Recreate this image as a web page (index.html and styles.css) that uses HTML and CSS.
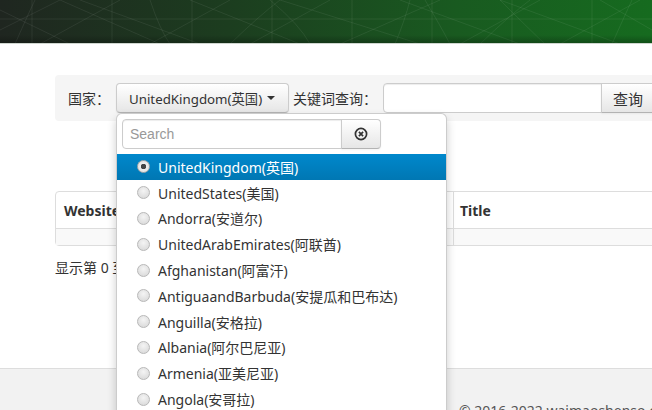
FILE: index.html
```html
<!DOCTYPE html>
<html lang="zh">
<head>
<meta charset="utf-8">
<title>查询</title>
<link rel="stylesheet" href="styles.css">
</head>
<body>
<header class="topbar">
  <svg class="pattern" width="652" height="44" viewBox="0 0 652 44" preserveAspectRatio="none">
    <g fill="none" stroke="rgba(255,255,255,0.07)" stroke-width="1">
      <line x1="0" y1="19" x2="652" y2="19"/>
      <line x1="32" y1="0" x2="32" y2="44"/>
      <line x1="112" y1="0" x2="112" y2="44"/>
      <line x1="192" y1="0" x2="192" y2="44"/>
      <line x1="272" y1="0" x2="272" y2="44"/>
      <line x1="352" y1="0" x2="352" y2="44"/>
      <line x1="432" y1="0" x2="432" y2="44"/>
      <line x1="512" y1="0" x2="512" y2="44"/>
      <line x1="592" y1="0" x2="592" y2="44"/>
      <path d="M0 10 L70 44 M0 30 L60 0 M60 0 L160 44 M40 44 L120 0 M80 0 L200 44 M150 44 L230 0 M190 0 L300 44 M250 44 L330 0 M280 0 L420 44 M340 44 L440 0 M400 0 L520 44 M460 44 L540 0 M500 0 L620 44 M560 44 L640 0 M600 0 L652 30"/>
      <path d="M15 44 Q30 10 35 0 M150 0 Q160 30 170 44 M230 44 Q260 15 280 0 M270 0 Q300 25 310 44 M395 44 Q405 20 410 0 M425 0 Q440 25 450 44 M480 44 Q510 15 530 0 M500 0 Q530 30 545 44 M612 44 Q625 15 632 0"/>
    </g>
  </svg>
</header>

<main class="page">
  <form class="searchbar">
    <label class="lbl">国家：</label>
    <div class="select-wrap">
      <button type="button" class="btn btn-select">UnitedKingdom(英国) <span class="caret"></span></button>
      <div class="dropdown">
        <div class="dd-search">
          <input class="dd-input" type="text" placeholder="Search">
          <button type="button" class="btn dd-clear">
            <svg width="14" height="14" viewBox="0 0 14 14"><circle cx="7" cy="7" r="5.6" fill="none" stroke="#333" stroke-width="1.7"/><path d="M4.9 4.9 L9.1 9.1 M9.1 4.9 L4.9 9.1" stroke="#333" stroke-width="1.7"/></svg>
          </button>
        </div>
        <ul class="dd-list">
          <li class="dd-item active"><span class="radio on"></span>UnitedKingdom(英国)</li>
          <li class="dd-item"><span class="radio"></span>UnitedStates(美国)</li>
          <li class="dd-item"><span class="radio"></span>Andorra(安道尔)</li>
          <li class="dd-item"><span class="radio"></span>UnitedArabEmirates(阿联酋)</li>
          <li class="dd-item"><span class="radio"></span>Afghanistan(阿富汗)</li>
          <li class="dd-item"><span class="radio"></span>AntiguaandBarbuda(安提瓜和巴布达)</li>
          <li class="dd-item"><span class="radio"></span>Anguilla(安格拉)</li>
          <li class="dd-item"><span class="radio"></span>Albania(阿尔巴尼亚)</li>
          <li class="dd-item"><span class="radio"></span>Armenia(亚美尼亚)</li>
          <li class="dd-item"><span class="radio"></span>Angola(安哥拉)</li>
        </ul>
      </div>
    </div>
    <label class="lbl lbl-kw">关键词查询：</label>
    <input class="kw" type="text">
    <button type="button" class="btn btn-query">查询</button>
  </form>

  <table class="results">
    <thead>
      <tr><th class="c1">Website</th><th class="c2">Title</th></tr>
    </thead>
    <tbody>
      <tr class="empty"><td></td><td></td></tr>
    </tbody>
  </table>

  <p class="info">显示第 0 至 0 项结果，共 0 项</p>
</main>

<footer class="footer">
  <p class="copy">© 2016-2022 waimaoshenso.com</p>
</footer>
</body>
</html>
```

FILE: styles.css
```css
* { box-sizing: border-box; }
html, body { margin: 0; padding: 0; }
body {
  width: 652px;
  height: 410px;
  overflow: hidden;
  background: #fff;
  font-family: "Noto Sans", "Noto Sans CJK SC", sans-serif;
  font-size: 14px;
  color: #333;
}

.topbar {
  height: 44px;
  background: linear-gradient(to right, #1f2620 0%, #1c3d1f 35%, #195a20 70%, #166b1f 100%);
  border-bottom: 1px solid #cfd6cf;
  position: relative;
  overflow: hidden;
}
.topbar::after {
  content: "";
  position: absolute;
  left: 0; right: 0; bottom: 0;
  height: 8px;
  background: linear-gradient(to bottom, rgba(0,0,0,0), rgba(0,0,0,0.25));
}
.pattern { display: block; }

.page {
  padding: 31px 0 0 55px;
  width: 760px;
}

.searchbar {
  display: flex;
  align-items: center;
  height: 46px;
  padding: 0 0 0 13px;
  background: #f5f5f5;
  border-radius: 4px 0 0 4px;
  margin: 0;
}
.lbl {
  line-height: 20px;
  font-family: "Noto Sans CJK SC", sans-serif;
  font-size: 14px;
}
.lbl-kw { margin-left: 4px; margin-right: 6px; }

.btn {
  font-family: inherit;
  font-size: 14px;
  color: #333;
  height: 30px;
  border: 1px solid #ccc;
  border-bottom-color: #b3b3b3;
  border-radius: 4px;
  background: linear-gradient(to bottom, #ffffff, #e6e6e6);
  box-shadow: inset 0 1px 0 rgba(255,255,255,.2), 0 1px 2px rgba(0,0,0,.05);
  padding: 0 12px;
  cursor: pointer;
}

.select-wrap { position: relative; margin-left: 6px; }
.btn-select {
  width: 173px;
  padding: 0 10px 0 12px;
  text-align: left;
  display: flex;
  align-items: center;
  white-space: nowrap;
  font-size: 13.3px;
}
.caret {
  display: inline-block;
  width: 0; height: 0;
  margin-left: 5px;
  border-top: 4px solid #333;
  border-left: 4px solid transparent;
  border-right: 4px solid transparent;
}

.kw {
  width: 219px;
  height: 30px;
  border: 1px solid #ccc;
  border-radius: 4px 0 0 4px;
  box-shadow: inset 0 1px 1px rgba(0,0,0,.075);
  background: #fff;
  padding: 4px 6px;
  font-family: inherit;
  font-size: 14px;
}
.btn-query {
  border-radius: 0 4px 4px 0;
  margin-left: -1px;
  width: 60px;
  font-size: 15px;
  text-align: left;
  padding: 0 0 0 11px;
  font-family: "Noto Sans CJK SC", sans-serif;
}

.dropdown {
  position: absolute;
  left: 0;
  top: 30px;
  width: 331px;
  height: 320px;
  background: #fff;
  border: 1px solid rgba(0,0,0,.2);
  border-radius: 6px;
  box-shadow: 0 5px 10px rgba(0,0,0,.2);
  padding-top: 5px;
  z-index: 10;
  overflow: hidden;
}
.dd-search {
  display: flex;
  padding: 0 5px;
}
.dd-input {
  width: 220px;
  height: 30px;
  border: 1px solid #ccc;
  border-radius: 4px 0 0 4px;
  box-shadow: inset 0 1px 1px rgba(0,0,0,.075);
  padding: 4px 7px;
  font-family: "Liberation Sans", "Noto Sans", sans-serif;
  font-size: 14px;
}
.dd-input::placeholder { color: #999; }
.dd-clear {
  width: 40px;
  height: 30px;
  border-radius: 0 4px 4px 0;
  margin-left: -1px;
  padding: 0;
  display: flex;
  align-items: center;
  justify-content: center;
}

.dd-list {
  list-style: none;
  margin: 5px 0 0;
  padding: 0;
}
.dd-item {
  height: 25.8px;
  display: flex;
  align-items: center;
  padding-left: 20px;
  white-space: nowrap;
  color: #333;
}
.dd-item.active {
  background: linear-gradient(to bottom, #0088cc, #0077b3);
  color: #fff;
}
.radio {
  width: 13px;
  height: 13px;
  border-radius: 50%;
  border: 1px solid #b8b8b8;
  background: radial-gradient(circle at 50% 35%, #f4f4f4, #d5d5d5);
  margin-right: 8px;
  position: relative;
  flex: none;
}
.radio.on {
  background: radial-gradient(circle, #444 0 2.5px, #eee 3px, #dcdcdc 100%);
  border-color: #aaa;
}

.results {
  margin-top: 70px;
  width: 100%;
  border-collapse: separate;
  border-spacing: 0;
  border: 1px solid #ddd;
  border-radius: 4px 0 0 4px;
}
.results th {
  text-align: left;
  font-weight: bold;
  height: 36px;
  padding: 0 8px;
  font-size: 14px;
}
.results .c1 { width: 397px; }
.results .c2 { border-left: 1px solid #ddd; padding-left: 6px; }
.results td {
  height: 17px;
  background: #f9f9f9;
  border-top: 1px solid #ddd;
  padding: 0;
}
.results td + td { border-left: 1px solid #ddd; }

.info {
  margin: 12px 0 0;
  line-height: 20px;
}

.footer {
  margin-top: 90px;
  background: #f2f2f2;
  border-top: 1px solid #ddd;
  height: 60px;
  padding: 32px 0 0 459px;
}
.copy { margin: 0; white-space: nowrap; font-size: 14px; color: #555; }
```
